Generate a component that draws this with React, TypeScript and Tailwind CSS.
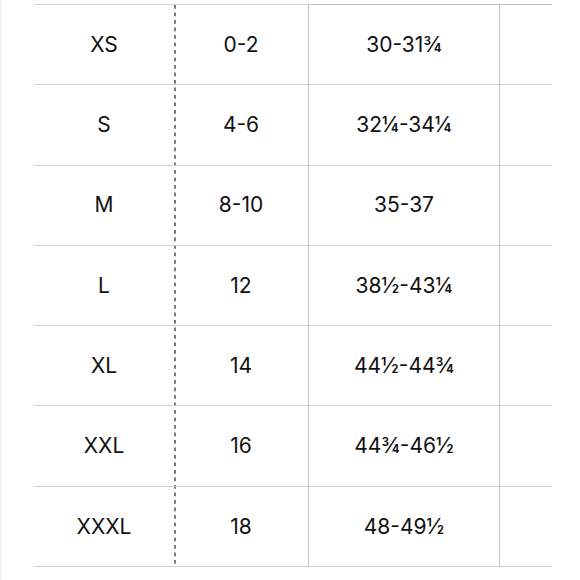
const sizes = [
  { label: 'XS', us: '0-2', chest: '30-31¾' },
  { label: 'S', us: '4-6', chest: '32¼-34¼' },
  { label: 'M', us: '8-10', chest: '35-37' },
  { label: 'L', us: '12', chest: '38½-43¼' },
  { label: 'XL', us: '14', chest: '44½-44¾' },
  { label: 'XXL', us: '16', chest: '44¾-46½' },
  { label: 'XXXL', us: '18', chest: '48-49½' },
]

const Cell = ({ children }: { children?: React.ReactNode }) => (
  <div className="flex h-[80.3px] items-center justify-center border-b border-[#d2d2d2]">
    {children}
  </div>
)

export default function App() {
  return (
    <div className="h-[580px] w-[580px] overflow-hidden border-l border-[#eeeeee] bg-white font-['Inter',sans-serif] text-[21px] text-[#111111]">
      <div className="ml-[33px] mt-[4px] flex w-[518px]">
        <div className="flex w-[140px] flex-col border-t border-[#d2d2d2]">
          {sizes.map((s) => (
            <Cell key={s.label}>{s.label}</Cell>
          ))}
        </div>
        <div className="flex w-[134px] flex-col border-t border-[#d2d2d2] bg-[linear-gradient(to_bottom,#7a7a7a_4px,transparent_4px)] bg-[length:2px_7.5px] bg-left-top bg-repeat-y">
          {sizes.map((s) => (
            <Cell key={s.label}>{s.us}</Cell>
          ))}
        </div>
        <div className="flex w-[191px] flex-col border-l border-t border-[#c4c4c4]">
          {sizes.map((s) => (
            <Cell key={s.label}>{s.chest}</Cell>
          ))}
        </div>
        <div className="flex w-[53px] flex-col border-l border-t border-[#c4c4c4]">
          {sizes.map((s) => (
            <Cell key={s.label} />
          ))}
        </div>
      </div>
    </div>
  )
}
